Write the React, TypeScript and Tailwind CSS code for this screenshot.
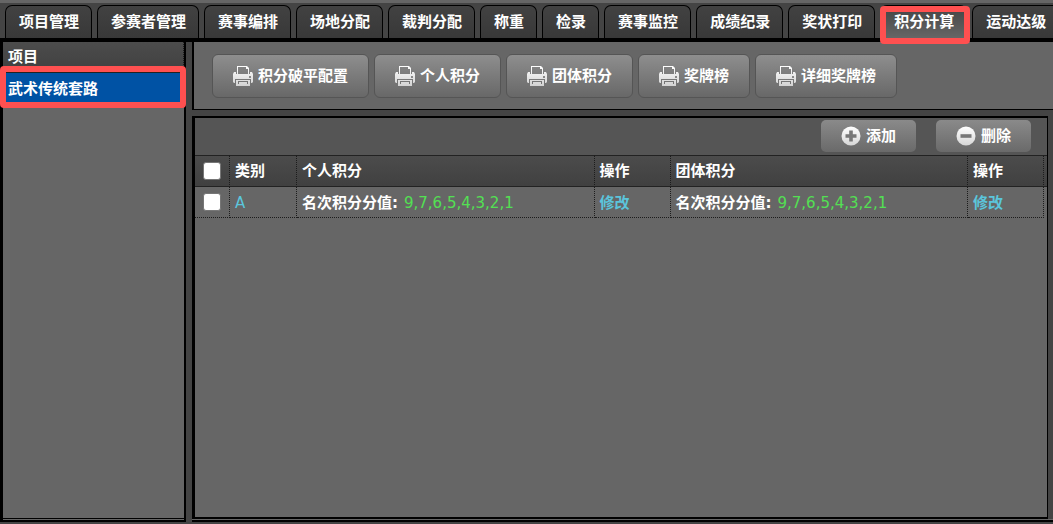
import React from 'react';

const tabs = [
  '项目管理',
  '参赛者管理',
  '赛事编排',
  '场地分配',
  '裁判分配',
  '称重',
  '检录',
  '赛事监控',
  '成绩纪录',
  '奖状打印',
  '积分计算',
  '运动达级',
];

const reports = ['积分破平配置', '个人积分', '团体积分', '奖牌榜', '详细奖牌榜'];

const rows = [{ category: 'A', personal: '9,7,6,5,4,3,2,1', team: '9,7,6,5,4,3,2,1' }];

const PrinterIcon: React.FC = () => (
  <svg className="w-5 h-5 shrink-0" viewBox="0 0 20 20" aria-hidden="true">
    <defs>
      <linearGradient id="printer" x1="0" y1="0" x2="0" y2="20" gradientUnits="userSpaceOnUse">
        <stop offset="0" stopColor="#fff" />
        <stop offset="1" stopColor="#d2d2d2" />
      </linearGradient>
    </defs>
    <g fill="url(#printer)">
      <path fillRule="evenodd" d="M4 0h10l2 2v6H4zM5 1v7h10V3h-2V1z" />
      <path d="M1 6h2v2h14V6h2l1 2v8l-1 1h-1v-4H2v4H1l-1-1V8z" />
      <path fillRule="evenodd" d="M3 14h14v6H3zM5 15v3h10v-3z" />
      <path d="M6 16h8v2H6z" />
    </g>
    <path d="M16 10h2v2h-2z" fill="#888" />
  </svg>
);

const RoundIcon: React.FC<{ plus?: boolean }> = ({ plus }) => (
  <svg className="w-5 h-5 shrink-0" viewBox="0 0 20 20" aria-hidden="true">
    <defs>
      <linearGradient id="disc" x1="0" y1="0" x2="0" y2="1">
        <stop offset="0" stopColor="#fff" />
        <stop offset="1" stopColor="#d6d6d6" />
      </linearGradient>
    </defs>
    <circle cx="10" cy="10" r="9.500" fill="url(#disc)" />
    <path d={plus ? 'M8.200 4.500h3.600v3.700h3.700v3.600h-3.700v3.700H8.200v-3.700H4.500V8.200h3.700z' : 'M4.500 8.200h11v3.600h-11z'} fill="#777" />
  </svg>
);

const Highlight: React.FC<{ className: string }> = ({ className }) => (
  <span className={`absolute z-10 border-6 border-[#ff5050] rounded-sm pointer-events-none ${className}`} />
);

const Score: React.FC<{ value: string }> = ({ value }) => (
  <span className="flex gap-[6px]">
    <span>名次积分分值:</span>
    <span className="font-normal text-[#53e053]">{value}</span>
  </span>
);

const App: React.FC = () => {
  const th = 'h-[32px] px-[5px] text-left font-bold border-y border-y-[#222] border-r border-r-[#1c1c1c] [border-right-style:dotted]';
  const td = 'h-[31px] px-[5px] border-b border-r border-dotted border-[#1c1c1c]';
  const box = 'block size-[18px] mx-auto appearance-none rounded-[3px] border border-[#767676] bg-white checked:bg-[#0052a4]';

  return (
    <div className="min-h-screen flex flex-col bg-[#444] border-t-3 border-[#666] pb-[2px] text-white text-[15px] leading-5 font-bold whitespace-nowrap font-['DejaVu_Sans','Noto_Sans_CJK_SC',sans-serif]">
      <nav className="flex gap-[5px] pt-[2px] pl-[5px] border-b-4 border-black overflow-x-clip">
        {tabs.map((tab) => (
          <a
            key={tab}
            href="#"
            className={`relative shrink-0 h-[33px] pt-[6px] pl-[13px] pr-[12px] rounded-t-[7px] border border-b-0 border-black bg-linear-to-b ${
              tab === '积分计算' ? 'z-10 from-[#444] to-[#666]' : 'from-[#424242] to-[#383838]'
            }`}
          >
            {tab}
            {tab === '积分计算' && <Highlight className="-left-px -right-1 top-0 -bottom-[6px]" />}
          </a>
        ))}
      </nav>

      <div className="grow flex">
        <aside className="w-[186px] shrink-0 flex flex-col bg-black border-l-3 border-r-2 border-b-2 border-black">
          <div className="grow flex flex-col mb-px bg-[#666]">
            <h2 className="h-[31px] pt-[5px] pl-[5px] bg-linear-to-b from-[#4c4c4c] to-[#404040] border-b border-[#222] border-r border-r-[#1c1c1c] [border-right-style:dotted]">
              项目
            </h2>
            <a href="#" className="relative h-[30px] pt-[6px] pl-[5px] bg-[#0052a4]">
              武术传统套路
              <Highlight className="-left-[3px] -right-[2px] -top-[7px] -bottom-[5px]" />
            </a>
          </div>
          <div className="h-px bg-[#666]" />
        </aside>

        <main className="grow min-w-0 ml-[6px] flex flex-col border-b-2 border-black">
          <div className="flex gap-[5px] pt-3 pb-[11px] pl-[18px] bg-[#666] border-l-2 border-b border-black">
            {reports.map((report) => (
              <button
                key={report}
                className="shrink-0 h-11 flex items-center gap-[5px] px-5 rounded-[6px] border border-[#555] bg-linear-to-b from-[#8e8e8e] to-[#686868]"
              >
                <PrinterIcon />
                {report}
              </button>
            ))}
          </div>

          <section className="grow mt-[6px] mr-[5px] bg-[#666] border-l-3 border-t-2 border-r border-b-2 border-black">
            <div className="flex justify-end gap-5 pt-[2px] pb-[3px] pr-4 bg-[#555]">
              <button className="h-8 flex items-center gap-[5px] px-5 rounded-[5px] bg-linear-to-b from-[#8a8a8a] to-[#6a6a6a]">
                <RoundIcon plus />
                添加
              </button>
              <button className="h-8 flex items-center gap-[5px] px-5 rounded-[5px] bg-linear-to-b from-[#8a8a8a] to-[#6a6a6a]">
                <RoundIcon />
                删除
              </button>
            </div>

            <table className="w-full table-fixed border-separate border-spacing-0">
              <colgroup>
                <col className="w-[35px]" />
                <col className="w-[67px]" />
                <col />
                <col className="w-[76px]" />
                <col />
                <col className="w-[76px]" />
                <col className="w-[3px]" />
              </colgroup>
              <thead className="bg-linear-to-b from-[#4c4c4c] to-[#404040]">
                <tr>
                  <th className={th}>
                    <input type="checkbox" aria-label="全选" className={box} />
                  </th>
                  <th className={th}>类别</th>
                  <th className={th}>个人积分</th>
                  <th className={th}>操作</th>
                  <th className={th}>团体积分</th>
                  <th className={th}>操作</th>
                  <th className="border-y border-[#222] p-0" />
                </tr>
              </thead>
              <tbody>
                {rows.map((row) => (
                  <tr key={row.category}>
                    <td className={td}>
                      <input type="checkbox" aria-label={row.category} className={box} />
                    </td>
                    <td className={`${td} pt-[2px] font-normal text-[#5bc5dc]`}>{row.category}</td>
                    <td className={`${td} pt-[2px]`}>
                      <Score value={row.personal} />
                    </td>
                    <td className={`${td} pt-[2px]`}>
                      <a href="#" className="text-[#5bc5dc]">修改</a>
                    </td>
                    <td className={`${td} pt-[2px]`}>
                      <Score value={row.team} />
                    </td>
                    <td className={`${td} pt-[2px]`}>
                      <a href="#" className="text-[#5bc5dc]">修改</a>
                    </td>
                    <td className="p-0" />
                  </tr>
                ))}
              </tbody>
            </table>
          </section>
          <div className="h-px bg-[#666]" />
        </main>
      </div>
    </div>
  );
};

export default App;
